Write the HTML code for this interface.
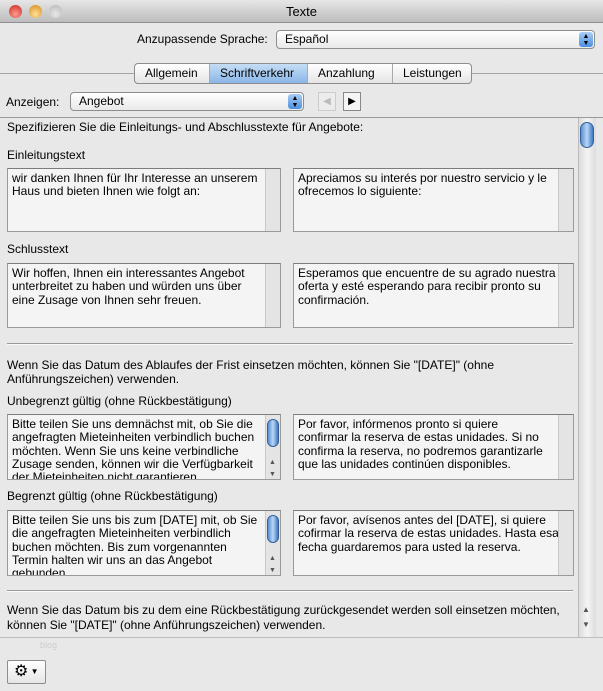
<!DOCTYPE html>
<html><head><meta charset="utf-8"><style>
*{margin:0;padding:0;box-sizing:border-box}
body{width:603px;height:691px;background:#e8e8e8;font-family:"Liberation Sans",sans-serif;font-size:12px;color:#000;position:relative;overflow:hidden}
.a{position:absolute;white-space:nowrap}
.title{left:0;top:0;width:603px;height:23px;background:linear-gradient(#e6e6e6,#bdbdbd);border-bottom:1px solid #8f8f8f;text-align:center;font-size:13px;line-height:23px}
.light{width:13px;height:13px;border-radius:50%;top:5px}
.pop{background:linear-gradient(#fff,#e9e9e9);border:1px solid #8d8d8d;border-radius:4px;height:19px;line-height:17px;padding-left:8px}
.pop .arr{position:absolute;right:1px;top:1px;width:14px;height:15px;border-radius:3px;background:linear-gradient(#a9cdf3,#4d8fe0);color:#000;font-size:7px;line-height:7px;text-align:center;padding-top:1px}
.tabs{left:134px;top:63px;height:21px;border:1px solid #8d8d8d;border-radius:4px;background:linear-gradient(#fff,#e5e5e5);display:flex;overflow:hidden}
.tabs div{padding:0 10px;line-height:19px;border-right:1px solid #aaa;font-size:12px}
.tabs div:last-child{border-right:0}
.tabs .sel{background:linear-gradient(#c6ddf5,#8ab6e8)}
.box{background:#f4f4f4;border:1px solid #9a9a9a;border-top-color:#7c7c7c;padding:3px 4px;line-height:13.3px;white-space:nowrap;overflow:hidden;font-size:12px}
.sb{position:absolute;top:0;right:0;width:15px;height:100%;background:#e4e4e4;border-left:1px solid #c8c8c8}
.thumb{position:absolute;left:1px;top:4px;width:12px;height:28px;border-radius:6px;background:linear-gradient(90deg,#5b8fd4,#b9d6f6,#3b77c7);border:1px solid #36609a}
.ud{position:absolute;left:3px;font-size:7px;color:#555}
.hr{left:7px;width:566px;height:1px;background:#9a9a9a;border-bottom:1px solid #fafafa;box-sizing:content-box}
</style></head><body>
<div class="a title">Texte</div>
<div class="a light" style="left:9px;background:radial-gradient(circle at 50% 70%,#ff9b8f,#c8261d)"></div>
<div class="a light" style="left:29px;background:radial-gradient(circle at 50% 70%,#ffe09b,#d48a12)"></div>
<div class="a light" style="left:49px;background:radial-gradient(circle at 50% 70%,#e8e8e8,#b5b5b5)"></div>

<div class="a" style="left:137px;top:32px">Anzupassende Sprache:</div>
<div class="a pop" style="left:276px;top:30px;width:319px">Español<div class="arr">▲<br>▼</div></div>

<div class="a" style="left:0;top:73px;width:603px;height:1px;background:#a5a5a5"></div>
<div class="a tabs"><div style="width:75px">Allgemein</div><div class="sel" style="width:98px">Schriftverkehr</div><div style="width:85px">Anzahlung</div><div style="width:78px">Leistungen</div></div>

<div class="a" style="left:6px;top:95px">Anzeigen:</div>
<div class="a pop" style="left:70px;top:92px;width:234px">Angebot<div class="arr">▲<br>▼</div></div>
<div class="a" style="left:318px;top:92px;width:18px;height:19px;border:1px solid #ccc;background:#ececec;color:#bbb;font-size:10px;text-align:center;line-height:17px">◀</div>
<div class="a" style="left:343px;top:92px;width:18px;height:19px;border:1px solid #888;background:#f5f5f5;font-size:10px;text-align:center;line-height:17px">▶</div>
<div class="a" style="left:0;top:117px;width:603px;height:1px;background:#9a9a9a"></div>

<div class="a" style="left:7px;top:120px">Spezifizieren Sie die Einleitungs- und Abschlusstexte für Angebote:</div>
<div class="a" style="left:7px;top:148px">Einleitungstext</div>
<div class="a box" style="left:7px;top:168px;width:274px;height:64px">wir danken Ihnen für Ihr Interesse an unserem<br>Haus und bieten Ihnen wie folgt an:<div class="sb"></div></div>
<div class="a box" style="left:293px;top:168px;width:281px;height:64px">Apreciamos su interés por nuestro servicio y le<br>ofrecemos lo siguiente:<div class="sb"></div></div>

<div class="a" style="left:7px;top:242px">Schlusstext</div>
<div class="a box" style="left:7px;top:263px;width:274px;height:65px">Wir hoffen, Ihnen ein interessantes Angebot<br>unterbreitet zu haben und würden uns über<br>eine Zusage von Ihnen sehr freuen.<div class="sb"></div></div>
<div class="a box" style="left:293px;top:263px;width:281px;height:65px">Esperamos que encuentre de su agrado nuestra<br>oferta y esté esperando para recibir pronto su<br>confirmación.<div class="sb"></div></div>

<div class="a hr" style="top:343px"></div>
<div class="a" style="left:7px;top:358px;line-height:14px">Wenn Sie das Datum des Ablaufes der Frist einsetzen möchten, können Sie "[DATE]" (ohne<br>Anführungszeichen) verwenden.</div>

<div class="a" style="left:7px;top:394px">Unbegrenzt gültig (ohne Rückbestätigung)</div>
<div class="a box" style="left:7px;top:414px;width:274px;height:66px">Bitte teilen Sie uns demnächst mit, ob Sie die<br>angefragten Mieteinheiten verbindlich buchen<br>möchten. Wenn Sie uns keine verbindliche<br>Zusage senden, können wir die Verfügbarkeit<br>der Mieteinheiten nicht garantieren.<div class="sb"><div class="thumb"></div><div class="ud" style="top:41px">▲</div><div class="ud" style="top:53px">▼</div></div></div>
<div class="a box" style="left:293px;top:414px;width:281px;height:66px">Por favor, infórmenos pronto si quiere<br>confirmar la reserva de estas unidades. Si no<br>confirma la reserva, no podremos garantizarle<br>que las unidades continúen disponibles.<div class="sb"></div></div>

<div class="a" style="left:7px;top:489px">Begrenzt gültig (ohne Rückbestätigung)</div>
<div class="a box" style="left:7px;top:510px;width:274px;height:66px">Bitte teilen Sie uns bis zum [DATE] mit, ob Sie<br>die angefragten Mieteinheiten verbindlich<br>buchen möchten. Bis zum vorgenannten<br>Termin halten wir uns an das Angebot<br>gebunden.<div class="sb"><div class="thumb"></div><div class="ud" style="top:41px">▲</div><div class="ud" style="top:53px">▼</div></div></div>
<div class="a box" style="left:293px;top:510px;width:281px;height:66px">Por favor, avísenos antes del [DATE], si quiere<br>cofirmar la reserva de estas unidades. Hasta esa<br>fecha guardaremos para usted la reserva.<div class="sb"></div></div>

<div class="a hr" style="top:590px"></div>
<div class="a" style="left:7px;top:603px;line-height:14.5px">Wenn Sie das Datum bis zu dem eine Rückbestätigung zurückgesendet werden soll einsetzen möchten,<br>können Sie "[DATE]" (ohne Anführungszeichen) verwenden.</div>

<div class="a" style="left:578px;top:118px;width:18px;height:519px;background:linear-gradient(90deg,#dcdcdc,#f4f4f4,#dcdcdc);border-left:1px solid #bbb"></div>
<div class="a" style="left:580px;top:122px;width:14px;height:26px;border-radius:7px;background:linear-gradient(90deg,#5b8fd4,#b9d6f6,#3b77c7);border:1px solid #36609a"></div>
<div class="a" style="left:582px;top:605px;font-size:8px;color:#555">▲</div>
<div class="a" style="left:582px;top:620px;font-size:8px;color:#555">▼</div>

<div class="a" style="left:0;top:637px;width:603px;height:1px;background:#bdbdbd"></div>
<div class="a" style="left:40px;top:640px;font-size:9px;color:#ccc">blog</div>
<div class="a" style="left:7px;top:660px;width:39px;height:24px;border:1px solid #8d8d8d;border-radius:2px;background:linear-gradient(#fff,#e6e6e6);font-size:16px;line-height:22px;padding-left:6px">⚙<span style="font-size:8px;vertical-align:middle"> ▼</span></div>
</body></html>
